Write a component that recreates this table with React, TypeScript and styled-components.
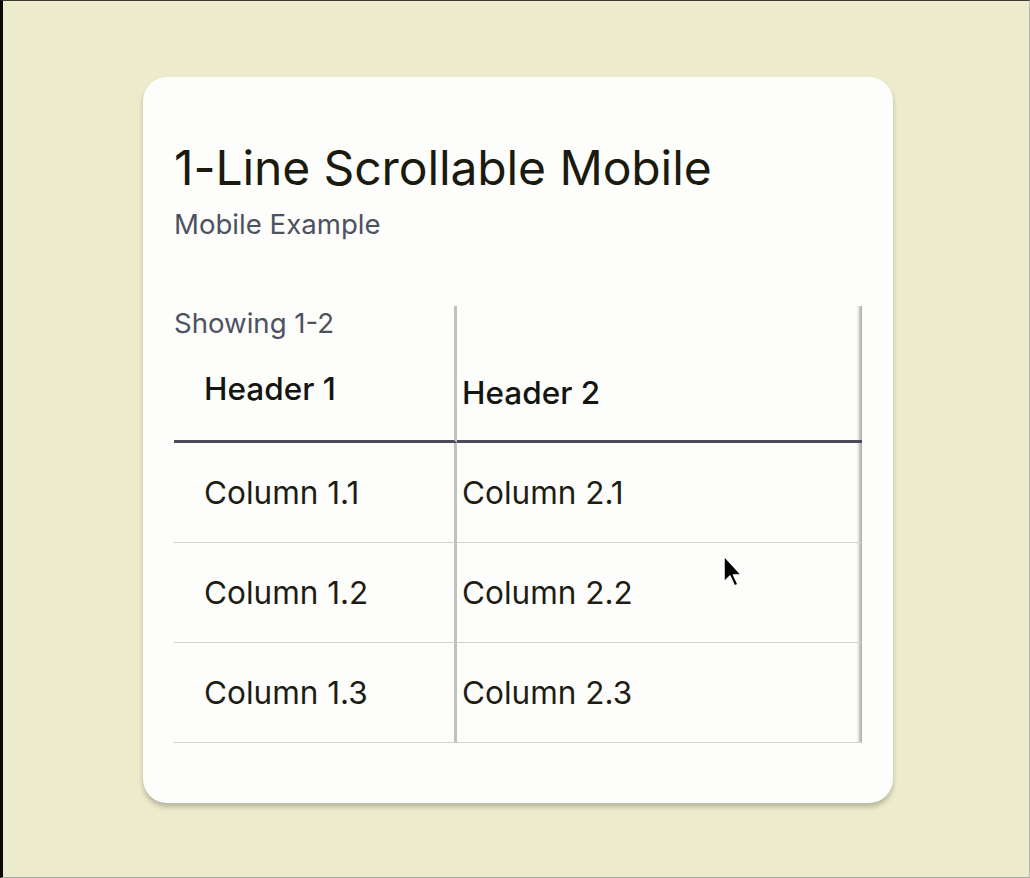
import styled, { createGlobalStyle } from 'styled-components';

const GlobalStyle = createGlobalStyle`
  html, body {
    margin: 0;
    padding: 0;
    background: #ecebcb;
  }
  * {
    box-sizing: border-box;
  }
`;

const Frame = styled.div`
  width: 1030px;
  height: 878px;
  background: #ecebcb;
  border-left: 3px solid #0a0a0a;
  border-top: 1px solid #3a3a3a;
  border-right: 1px solid #b8b8b4;
  border-bottom: 1px solid #a8a8a4;
  padding: 76px 0 0 140px;
  font-family: Inter, 'Noto Sans', sans-serif;
  position: relative;
`;

const Card = styled.section`
  width: 750px;
  height: 726px;
  background: #fdfdfb;
  border-radius: 24px;
  box-shadow: 0 4px 5px rgba(0, 0, 0, 0.22);
  padding: 62px 31px 0 31px;
  display: flex;
  flex-direction: column;
`;

const Title = styled.h1`
  margin: 0;
  font-size: 48px;
  line-height: 58px;
  font-weight: 400;
  color: #1a1a0e;
  letter-spacing: -0.1px;
`;

const Subtitle = styled.p`
  margin: 10px 0 0;
  font-size: 27.6px;
  line-height: 34px;
  color: #4d5261;
`;

const TableWrap = styled.div`
  margin-top: 65px;
  width: 688px;
  box-shadow: inset -6px 0 3px -3px rgba(0, 0, 0, 0.3);
`;

const Table = styled.table`
  width: 100%;
  border-collapse: separate;
  border-spacing: 0;
  table-layout: fixed;
`;

const HeadCell = styled.th<{ $first?: boolean }>`
  height: 137px;
  padding: 0 0 28px ${({ $first }) => ($first ? '0' : '5px')};
  width: ${({ $first }) => ($first ? '283px' : 'auto')};
  text-align: left;
  vertical-align: bottom;
  font-size: 31.5px;
  line-height: 38px;
  font-weight: 500;
  color: #141410;
  border-bottom: 3px solid #4a4b59;
  border-right: ${({ $first }) => ($first ? '3px solid #c0c0bc' : 'none')};
`;

const HeadStack = styled.div`
  display: flex;
  flex-direction: column;
  justify-content: space-between;
  height: 106px;
`;

const Caption = styled.span`
  font-size: 27.6px;
  line-height: 34px;
  font-weight: 400;
  color: #4d5261;
`;

const HeadLabel = styled.span`
  padding-left: 30px;
  margin-bottom: 4px;
`;

const Cell = styled.td<{ $first?: boolean }>`
  height: 100px;
  padding: 0 0 0 ${({ $first }) => ($first ? '30px' : '5px')};
  vertical-align: middle;
  font-size: 31.5px;
  line-height: 38px;
  color: #1d1d14;
  border-bottom: 1px solid #d2d2cc;
  border-right: ${({ $first }) => ($first ? '3px solid #c0c0bc' : 'none')};
`;

const Pointer = styled.svg`
  position: absolute;
  left: 719px;
  top: 554px;
`;

const rows = [
  ['Column 1.1', 'Column 2.1'],
  ['Column 1.2', 'Column 2.2'],
  ['Column 1.3', 'Column 2.3'],
];

export default function App() {
  return (
    <>
      <GlobalStyle />
      <Frame>
        <Card>
          <Title>1-Line Scrollable Mobile</Title>
          <Subtitle>Mobile Example</Subtitle>
          <TableWrap>
            <Table>
              <thead>
                <tr>
                  <HeadCell $first>
                    <HeadStack>
                      <Caption>Showing 1-2</Caption>
                      <HeadLabel>Header 1</HeadLabel>
                    </HeadStack>
                  </HeadCell>
                  <HeadCell>Header 2</HeadCell>
                </tr>
              </thead>
              <tbody>
                {rows.map(([a, b]) => (
                  <tr key={a}>
                    <Cell $first>{a}</Cell>
                    <Cell>{b}</Cell>
                  </tr>
                ))}
              </tbody>
            </Table>
          </TableWrap>
        </Card>
        <Pointer width="24" height="36" viewBox="0 0 24 36">
          <path d="M2 1 L2 27 L8 21 L12.5 31 L16 29.5 L11.5 20 L19.5 20 Z" fill="#000" stroke="#fff" strokeWidth="1.5" strokeLinejoin="round" />
        </Pointer>
      </Frame>
    </>
  );
}
